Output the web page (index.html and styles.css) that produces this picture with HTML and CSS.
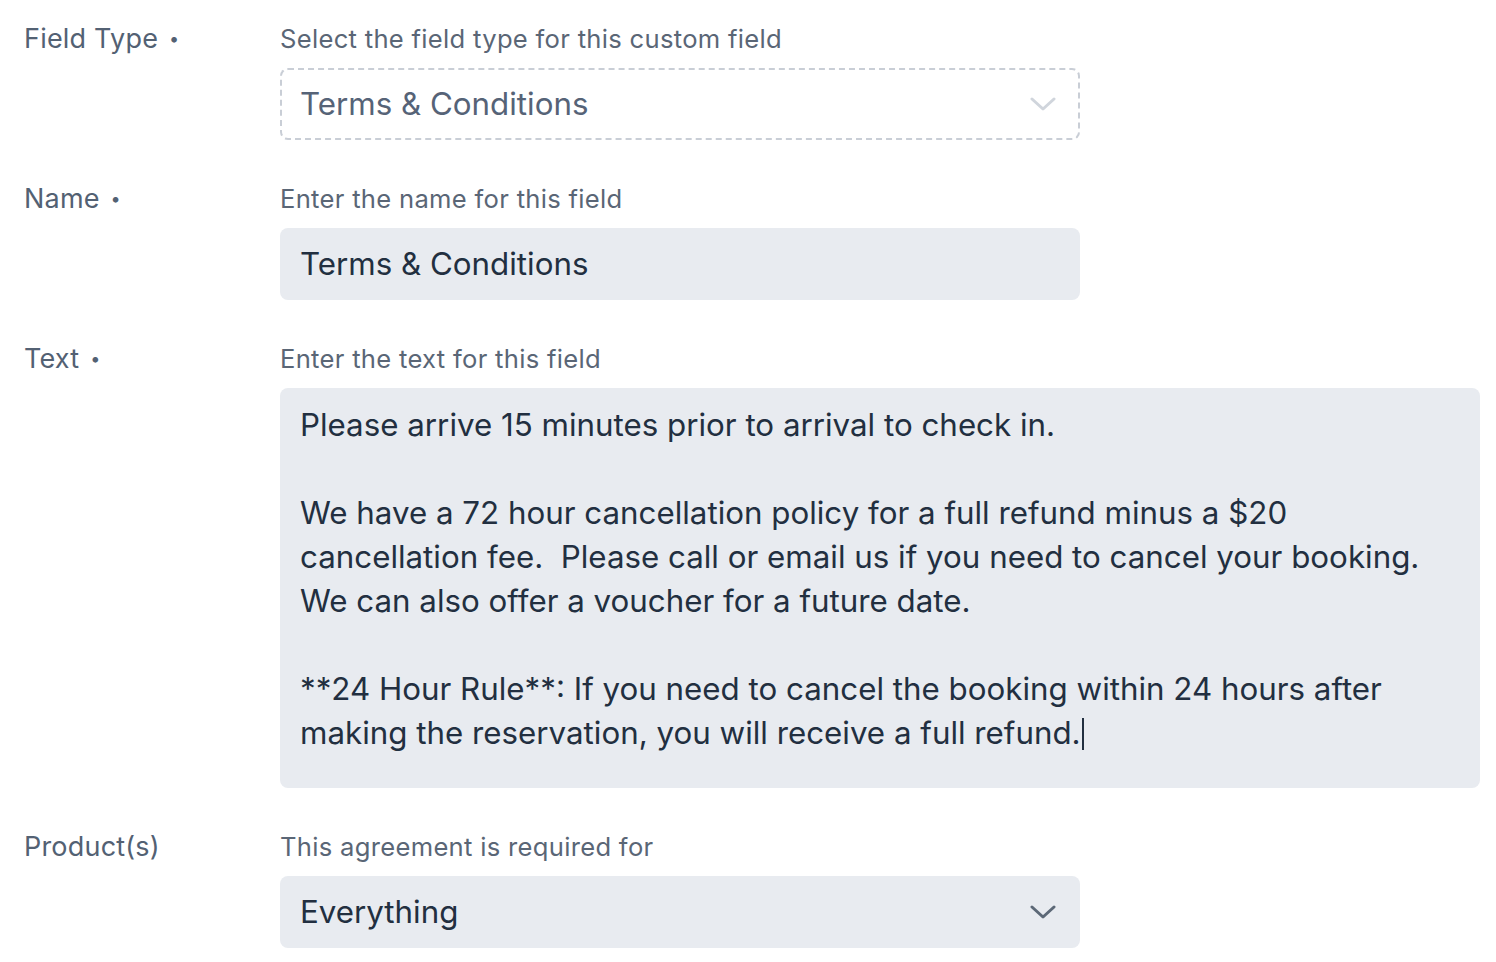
FILE: index.html
```html
<!DOCTYPE html>
<html>
<head>
<meta charset="utf-8">
<link rel="stylesheet" href="styles.css">
</head>
<body>
<div class="form">
  <div class="row">
    <div class="label">Field Type <span class="dot">•</span></div>
    <div class="field">
      <div class="desc">Select the field type for this custom field</div>
      <div class="select disabled">
        <span class="value">Terms &amp; Conditions</span>
        <svg class="chev" width="26" height="16" viewBox="0 0 26 16"><path d="M2 3 L13 13 L24 3" fill="none" stroke="currentColor" stroke-width="3" stroke-linecap="round" stroke-linejoin="round"/></svg>
      </div>
    </div>
  </div>
  <div class="row">
    <div class="label">Name <span class="dot">•</span></div>
    <div class="field">
      <div class="desc">Enter the name for this field</div>
      <div class="input"><span class="value">Terms &amp; Conditions</span></div>
    </div>
  </div>
  <div class="row">
    <div class="label">Text <span class="dot">•</span></div>
    <div class="field">
      <div class="desc">Enter the text for this field</div>
      <div class="textarea">
        <p>Please arrive 15 minutes prior to arrival to check in.</p>
        <p>&nbsp;</p>
        <p>We have a 72 hour cancellation policy for a full refund minus a $20<br>cancellation fee.&nbsp; Please call or email us if you need to cancel your booking.<br>We can also offer a voucher for a future date.</p>
        <p>&nbsp;</p>
        <p>**24 Hour Rule**: If you need to cancel the booking within 24 hours after<br>making the reservation, you will receive a full refund.<span class="caret"></span></p>
      </div>
    </div>
  </div>
  <div class="row">
    <div class="label">Product(s)</div>
    <div class="field">
      <div class="desc">This agreement is required for</div>
      <div class="select">
        <span class="value">Everything</span>
        <svg class="chev" width="26" height="16" viewBox="0 0 26 16"><path d="M2 3 L13 13 L24 3" fill="none" stroke="currentColor" stroke-width="3" stroke-linecap="round" stroke-linejoin="round"/></svg>
      </div>
    </div>
  </div>
</div>
</body>
</html>
```

FILE: styles.css
```css
html, body {
  margin: 0;
  padding: 0;
  background: #ffffff;
}
body {
  font-family: Inter, "Noto Sans", sans-serif;
  -webkit-font-smoothing: antialiased;
}
.form {
  padding: 24px 0 0 24px;
  display: flex;
  flex-direction: column;
  gap: 44px;
}
.row {
  display: grid;
  grid-template-columns: 256px 1200px;
}
.label {
  font-size: 27px;
  line-height: 28px;
  color: #536173;
  letter-spacing: 0.2px;
  padding-top: 1px;
}
.dot {
  font-size: 18px;
  vertical-align: 3px;
  margin-left: 3px;
}
.field {
  display: flex;
  flex-direction: column;
  gap: 16px;
}
.desc {
  font-size: 25.6px;
  line-height: 28px;
  color: #5a6676;
  letter-spacing: 0.3px;
  padding-top: 1px;
  margin-bottom: -1px;
}
.select, .input {
  width: 800px;
  height: 72px;
  box-sizing: border-box;
  border-radius: 8px;
  background: #e8ebf0;
  display: flex;
  align-items: center;
  justify-content: space-between;
  padding: 0 24px 0 20px;
}
.value {
  font-size: 31.3px;
  color: #222f40;
}
.chev {
  color: #5c6877;
}
.select.disabled {
  background: #ffffff;
  border: 2px dashed #c9ced6;
  padding: 0 22px 0 18px;
}
.select.disabled .value {
  color: #566377;
}
.select.disabled .chev {
  color: #d0d5dc;
}
.textarea {
  width: 1200px;
  height: 400px;
  box-sizing: border-box;
  border-radius: 8px;
  background: #e8ebf0;
  padding: 15px 20px;
  font-size: 31.3px;
  line-height: 44px;
  color: #222f40;
}
.textarea p {
  margin: 0;
}
.caret {
  display: inline-block;
  width: 2px;
  height: 32px;
  background: #222f40;
  vertical-align: -6px;
  margin-left: 1px;
}
```
